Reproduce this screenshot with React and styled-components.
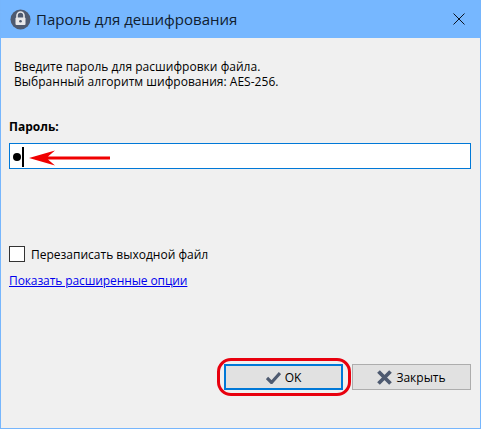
import React from "react";
import styled, { createGlobalStyle } from "styled-components";

const Global = createGlobalStyle`
  html, body { margin: 0; padding: 0; background: #f0f0f0; }
  * { box-sizing: border-box; }
  #root { width: 481px; height: 429px; }
`;

const Win = styled.div`
  width: 481px; height: 429px;
  display: flex; flex-direction: column;
  background: #f0f0f0;
  border: 1px solid #76b6fd;
  border-top: 0;
  font-family: "Open Sans", "Noto Sans", sans-serif;
  font-size: 12px;
  color: #000;
`;
const TitleBar = styled.header`
  height: 38px; flex: none;
  background: #76b7ff;
  display: flex; align-items: center;
  padding: 0 15px 0 9px;
  gap: 5px;
`;
const Title = styled.div`
  flex: 1;
  font-size: 15px;
  color: #10202f;
`;
const Body = styled.main`
  flex: 1;
  display: flex; flex-direction: column;
  padding: 21px 9px 0 8px;
`;
const Intro = styled.div`
  margin-left: 5px;
`;
const IntroLine = styled.div`
  height: 15px;
  line-height: 15px;
  letter-spacing: 0.03px;
`;
const Label = styled.label`
  display: block;
  margin-top: 30px;
  font-weight: 700;
  line-height: 16px;
`;
const InputBox = styled.div`
  position: relative;
  margin-top: 8px;
  height: 26px;
  background: #fff;
  border: 1px solid #0078d7;
  display: flex; align-items: center;
  padding: 2px 0 0 3px;
`;
const Dot = styled.span`
  width: 8px; height: 8px; border-radius: 50%;
  background: #000;
`;
const Caret = styled.span`
  width: 2px; height: 20px; margin-left: 1px;
  background: #000;
`;
const Arrow = styled.svg`
  position: absolute; left: 19px; top: 5px;
`;
const CheckRow = styled.div`
  margin-top: 77px;
  display: flex; align-items: center;
  gap: 6px;
  height: 16px;
`;
const Check = styled.span`
  width: 16px; height: 16px;
  background: #fff;
  border: 1px solid #333;
`;
const LinkText = styled.a`
  margin-top: 11px;
  line-height: 16px;
  color: #0000ee;
  text-decoration: underline;
  align-self: flex-start;
  letter-spacing: -0.1px;
`;
const Actions = styled.div`
  margin-top: auto;
  margin-bottom: 38px;
  display: flex; justify-content: flex-end;
  gap: 9px;
`;
const Button = styled.button`
  position: relative;
  width: 119px; height: 26px;
  padding: 0;
  display: flex; align-items: center; justify-content: center;
  gap: 4px;
  background: #e1e1e1;
  border: ${(p) => (p.$primary ? "2px solid #0078d7" : "1px solid #adadad")};
  font: inherit;
  color: #000;
`;
const Ring = styled.span`
  position: absolute;
  left: -9px; top: -8px; right: -10px; bottom: -8px;
  border: 3px solid #e8000e;
  border-radius: 14px;
`;

export default function App() {
  return (
    <>
      <Global />
      <Win>
        <TitleBar>
          <svg width="21" height="21" viewBox="0 0 21 21">
            <circle cx="10.5" cy="10.5" r="10" fill="#4e5a70" />
            <path d="M7 9V6.5a3.5 3.5 0 0 1 7 0V9" fill="none" stroke="#e8e8ea" strokeWidth="1.6" />
            <rect x="5.5" y="8.5" width="10" height="7.5" rx="1" fill="#e8e8ea" />
            <circle cx="10.5" cy="12.2" r="1.3" fill="#4e5a70" />
          </svg>
          <Title>Пароль для дешифрования</Title>
          <svg width="12" height="12" viewBox="0 0 12 12">
            <path d="M0.5 0.5L11.5 11.5M11.5 0.5L0.5 11.5" stroke="#0c1420" strokeWidth="1" />
          </svg>
        </TitleBar>
        <Body>
          <Intro>
            <IntroLine>Введите пароль для расшифровки файла.</IntroLine>
            <IntroLine>Выбранный алгоритм шифрования: AES-256.</IntroLine>
          </Intro>
          <Label>Пароль:</Label>
          <InputBox>
            <Dot />
            <Caret />
            <Arrow width="84" height="18" viewBox="0 0 84 18">
              <path d="M0 9L26 1.5L19 7.5H81V10.5H19L26 16.5Z" fill="#f00000" />
            </Arrow>
          </InputBox>
          <CheckRow>
            <Check />
            <span>Перезаписать выходной файл</span>
          </CheckRow>
          <LinkText>Показать расширенные опции</LinkText>
          <Actions>
            <Button $primary>
              <Ring />
              <svg width="15" height="13" viewBox="0 0 15 13">
                <path d="M1 7L5.5 11.5L14 2" fill="none" stroke="#4e5a70" strokeWidth="3.2" />
              </svg>
              <span>OK</span>
            </Button>
            <Button>
              <svg width="15" height="15" viewBox="0 0 15 15">
                <path d="M1.5 1.5L13.5 13.5M13.5 1.5L1.5 13.5" fill="none" stroke="#4e5a70" strokeWidth="3.8" />
              </svg>
              <span>Закрыть</span>
            </Button>
          </Actions>
        </Body>
      </Win>
    </>
  );
}
